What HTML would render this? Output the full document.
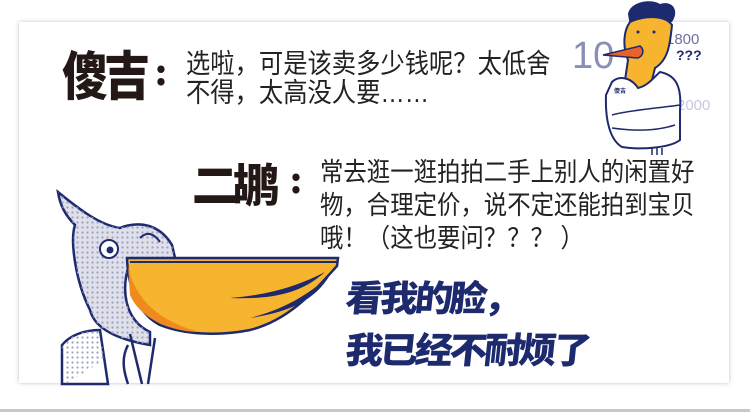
<!DOCTYPE html>
<html><head><meta charset="utf-8"><style>
html,body{margin:0;padding:0;background:#fff;}
body{width:750px;height:412px;position:relative;overflow:hidden;font-family:"Liberation Sans","Noto Sans CJK SC",sans-serif;}
.card{position:absolute;left:19px;top:22px;width:710px;height:361px;background:#fff;box-shadow:0 0 4px rgba(0,0,0,.25);}
.bar{position:absolute;left:0;top:409px;width:750px;height:3px;background:#c8c8c8;}
.t{position:absolute;color:#222;white-space:nowrap;transform-origin:left top;}
.big{position:absolute;font-weight:900;color:#231815;font-family:"WenQuanYi Zen Hei","Noto Sans CJK SC",sans-serif;white-space:nowrap;}
.blue{position:absolute;font-weight:900;color:#1e2a6e;font-family:"Noto Sans CJK SC",sans-serif;white-space:nowrap;transform:skewX(-6deg) scaleX(1.05);transform-origin:left;}
</style></head><body>
<div class="card"></div>
<div class="bar"></div>

<div class="big" style="left:62px;top:40px;font-size:46px;letter-spacing:-4px;transform:scaleY(1.15);">傻吉</div>
<div class="big" style="left:155px;top:46px;font-size:34px;">:</div>
<div class="t" style="left:186px;top:50px;font-size:27px;line-height:29px;transform:scaleX(0.9);">选啦，可是该卖多少钱呢？太低舍<br>不得，太高没人要……</div>

<div class="big" style="left:192px;top:150px;font-size:46px;letter-spacing:-5px;">二鹕</div>
<div class="big" style="left:290px;top:154px;font-size:34px;">:</div>
<div class="t" style="left:320px;top:156px;font-size:26px;line-height:33px;transform:scaleX(0.9);">常去逛一逛拍拍二手上别人的闲置好<br>物，合理定价，说不定还能拍到宝贝<br>哦！（这也要问？？？ ）</div>

<div class="blue" style="left:346px;top:270px;font-size:36px;letter-spacing:-3px;">看我的脸，</div>
<div class="blue" style="left:346px;top:322px;font-size:36px;letter-spacing:-3px;">我已经不耐烦了</div>

<svg style="position:absolute;left:0;top:0" width="750" height="412">
<defs><pattern id="dots" width="5" height="5" patternUnits="userSpaceOnUse"><circle cx="2.5" cy="2.5" r="1.1" fill="#9aa0c0"/></pattern></defs>
<path d="M58,192 C80,210 100,225 120,228 C140,220 160,225 172,245 L176,262 L130,262 C120,290 125,320 150,332 L150,345 C120,340 95,330 90,310 C75,280 70,240 75,225 C65,215 60,205 58,192Z" fill="#dfe0ea" stroke="#1e2a6e" stroke-width="2.5"/>
<path d="M58,192 C80,210 100,225 120,228 C140,220 160,225 172,245 L176,262 L130,262 C120,290 125,320 150,332 L150,345 C120,340 95,330 90,310 C75,280 70,240 75,225 C65,215 60,205 58,192Z" fill="url(#dots)"/>
<circle cx="109" cy="249" r="9" fill="#fff" stroke="#1e2a6e" stroke-width="2"/>
<circle cx="110" cy="250" r="3.5" fill="#1e2a6e"/>
<path d="M140,238 C148,230 155,235 160,242" fill="none" stroke="#1e2a6e" stroke-width="2"/>
<path d="M127,258 L338,258 L337,266 C315,290 290,320 250,330 C220,336 185,335 160,325 C140,315 128,290 127,258Z" fill="#f7b52f" stroke="#1e2a6e" stroke-width="2.5"/>
<path d="M128,266 C135,300 160,322 200,332 C170,332 140,318 130,295Z" fill="#ef8a1e"/>
<path d="M130,262 L337,262" stroke="#1e2a6e" stroke-width="2"/>
<path d="M230,298 C270,295 300,285 325,272 C305,290 280,300 230,298Z" fill="#1e2a6e"/>
<path d="M250,318 C280,310 305,298 330,275 C315,300 290,312 250,318Z" fill="#1e2a6e"/>
<path d="M62,345 C70,335 85,330 100,330 L108,384 L62,384Z" fill="#fff" stroke="#1e2a6e" stroke-width="2.5"/>
<path d="M62,345 C70,335 85,330 100,330 L104,360 L66,384Z" fill="url(#dots)"/>
<path d="M130,334 L142,384 M155,338 L148,384 M128,345 C120,360 125,375 128,384" fill="none" stroke="#1e2a6e" stroke-width="2.5"/>

<text x="572" y="68" font-family="Liberation Sans" font-size="38" fill="#8a8fb5">10</text>
<text x="666" y="44" font-family="Liberation Sans" font-size="15" fill="#6a70a0">1800</text>
<text x="676" y="60" font-family="Liberation Sans" font-size="14" font-weight="bold" fill="#1e2a6e">???</text>
<text x="677" y="110" font-family="Liberation Sans" font-size="15" fill="#c5c8de">2000</text>
<path d="M628,14 C630,2 650,-2 660,4 C672,0 680,10 672,22 L630,26Z" fill="#1e2a6e"/>
<path d="M630,22 C645,15 665,15 672,25 C670,45 668,60 655,68 L650,88 C640,92 628,90 625,80 L628,60 C622,45 624,30 630,22Z" fill="#f7b52f" stroke="#1e2a6e" stroke-width="2"/>
<path d="M603,55 L640,46 C645,50 643,56 638,58Z" fill="#e8632a" stroke="#1e2a6e" stroke-width="1.5"/>
<circle cx="638" cy="32" r="1.5" fill="#1e2a6e"/><circle cx="654" cy="32" r="1.5" fill="#1e2a6e"/>
<path d="M612,82 C618,76 630,76 638,88 C648,86 655,76 660,72 C675,75 682,85 680,110 L680,140 C670,148 640,150 622,147 C610,140 605,120 606,95Z" fill="#fff" stroke="#1e2a6e" stroke-width="2"/>
<path d="M612,115 C630,110 660,108 680,105 M612,128 C640,132 660,130 675,125" fill="none" stroke="#1e2a6e" stroke-width="1.5"/>
<path d="M652,148 L652,155 M657,148 L657,155 M662,148 L662,155" stroke="#1e2a6e" stroke-width="1.5"/>
<text x="614" y="93" font-family="Noto Sans CJK SC" font-size="6" font-weight="bold" fill="#1e2a6e">傻吉</text>
</svg>
</body></html>
